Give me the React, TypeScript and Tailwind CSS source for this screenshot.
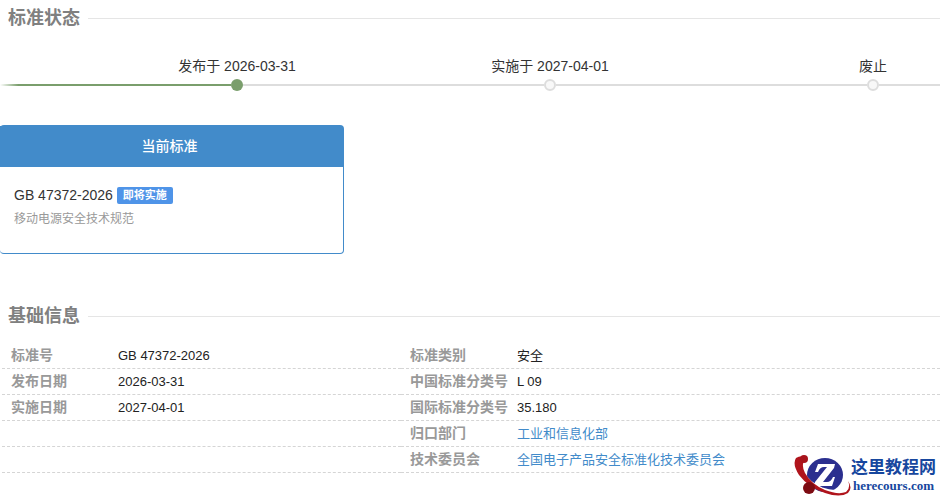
import type { ReactNode } from 'react'
import clsx from 'clsx'

type Field = { label: string; value: ReactNode; link?: boolean }

const steps = [
  { label: '发布于 2026-03-31', done: true },
  { label: '实施于 2027-04-01', done: false },
  { label: '废止', done: false },
]

const leftFields: Field[] = [
  { label: '标准号', value: 'GB 47372-2026' },
  { label: '发布日期', value: '2026-03-31' },
  { label: '实施日期', value: '2027-04-01' },
  { label: '', value: '' },
  { label: '', value: '' },
]

const rightFields: Field[] = [
  { label: '标准类别', value: '安全' },
  { label: '中国标准分类号', value: 'L 09' },
  { label: '国际标准分类号', value: '35.180' },
  { label: '归口部门', value: '工业和信息化部', link: true },
  { label: '技术委员会', value: '全国电子产品安全标准化技术委员会', link: true },
]

function SectionTitle({ children }: { children: ReactNode }) {
  return (
    <div className="flex items-center gap-2 pl-2">
      <h2 className="text-[18px] leading-6 font-bold text-[#808080]">{children}</h2>
      <div className="h-px flex-1 bg-[#e5e5e5]" />
    </div>
  )
}

function Timeline() {
  return (
    <ol className="mt-6 grid grid-cols-[474fr_152fr_314fr]">
      {steps.map((s, i) => {
        const last = i === steps.length - 1
        return (
          <li key={s.label} className="flex">
            {/* plain stretch of track before the last step */}
            {last && <div className="mb-[5px] w-[180px] self-end border-b-2 border-[#dddddd]" />}
            <div className="flex-1">
              <div className="text-center text-[14px] leading-[25px] whitespace-nowrap text-[#333333]">{s.label}</div>
              <div className="flex items-center">
                <div className={clsx('h-0.5 flex-1', s.done ? 'bg-linear-to-r from-white via-[#7a9e6c] via-8% to-[#7a9e6c]' : 'bg-[#dddddd]')} />
                <div className={clsx('size-3 rounded-full', s.done ? 'bg-[#7a9e6c]' : 'border-2 border-[#dddddd] bg-[#f8f8f8]')} />
                <div className="h-0.5 flex-1 bg-[#dddddd]" />
              </div>
            </div>
          </li>
        )
      })}
    </ol>
  )
}

function CurrentStandard() {
  return (
    <section className="mt-[34px] w-[344px] rounded-sm border border-l-0 border-[#428bca] pb-[22px]">
      <h3 className="bg-[#428bca] pr-1 text-center text-[14px] leading-[41px] font-medium text-white">当前标准</h3>
      <div className="px-[14px] pt-4">
        <div className="flex items-center gap-1">
          <span className="text-[14px] leading-6 text-[#333333]">GB 47372-2026</span>
          <span className="rounded-xs bg-[#4f94e8] px-[6px] text-[11px] leading-[17px] font-bold text-white">即将实施</span>
        </div>
        <p className="text-[12px] leading-6 text-[#999999]">移动电源安全技术规范</p>
      </div>
    </section>
  )
}

function FieldRow({ label, value, link }: Field) {
  return (
    <div className="flex h-[26px] items-center border-b border-dashed border-[#d5d5d5]">
      <dt className="w-[116px] shrink-0 pl-[9px] text-[14px] font-bold whitespace-nowrap text-[#999999]">{label}</dt>
      <dd className="text-[13px] whitespace-nowrap text-[#222222]">
        {link ? <a href="#" className="text-[#428bca]">{value}</a> : value}
      </dd>
    </div>
  )
}

function SiteLogo() {
  return (
    <div className="absolute right-0 bottom-0 flex items-center bg-white pb-px">
      <svg viewBox="0 0 58 42" className="h-[42px] w-[58px]" aria-hidden="true">
        <ellipse cx="32" cy="20" rx="18" ry="17" fill="#2b2f8f" />
        <path d="M25 9H42L41 13L30 27H34Q38 27 40 22H42L39 31H21L22 27L34 12H31Q27 12 25 17H22Z" fill="#fff" />
        <path d="M9 17Q15 28 29 34Q43 39 52 34" fill="none" stroke="#fff" strokeWidth="3" />
        <path d="M14 2Q7 0 3 3Q-1 9 6 20Q15 32 32 38Q47 43 55 38Q60 33 55 26Q58 33 53 37Q45 40 32 35Q18 29 12 18Q7 9 14 2Z" fill="#b0141c" />
        <circle cx="11" cy="4" r="4" fill="#a8141c" />
        <circle cx="16" cy="33" r="6" fill="#7d0b12" />
      </svg>
      <div className="pr-1 text-center text-[#17479e]">
        <div className="text-[17px] leading-5 font-bold">这里教程网</div>
        <div className="font-['Liberation_Serif',serif] text-[13px] leading-4 font-bold">herecours.com</div>
      </div>
    </div>
  )
}

export default function App() {
  return (
    <main className="relative overflow-hidden bg-white pt-[6px] pb-[25px] font-['Liberation_Sans','Noto_Sans_CJK_SC',sans-serif]">
      <SectionTitle>标准状态</SectionTitle>
      <Timeline />
      <CurrentStandard />
      <div className="mt-[50px]">
        <SectionTitle>基础信息</SectionTitle>
      </div>
      <div className="mt-[15px] grid grid-cols-[401fr_539fr]">
        <dl className="pl-[2px]">
          {leftFields.map((f, i) => <FieldRow key={i} {...f} />)}
        </dl>
        <dl>
          {rightFields.map((f, i) => <FieldRow key={i} {...f} />)}
        </dl>
      </div>
      <SiteLogo />
    </main>
  )
}
